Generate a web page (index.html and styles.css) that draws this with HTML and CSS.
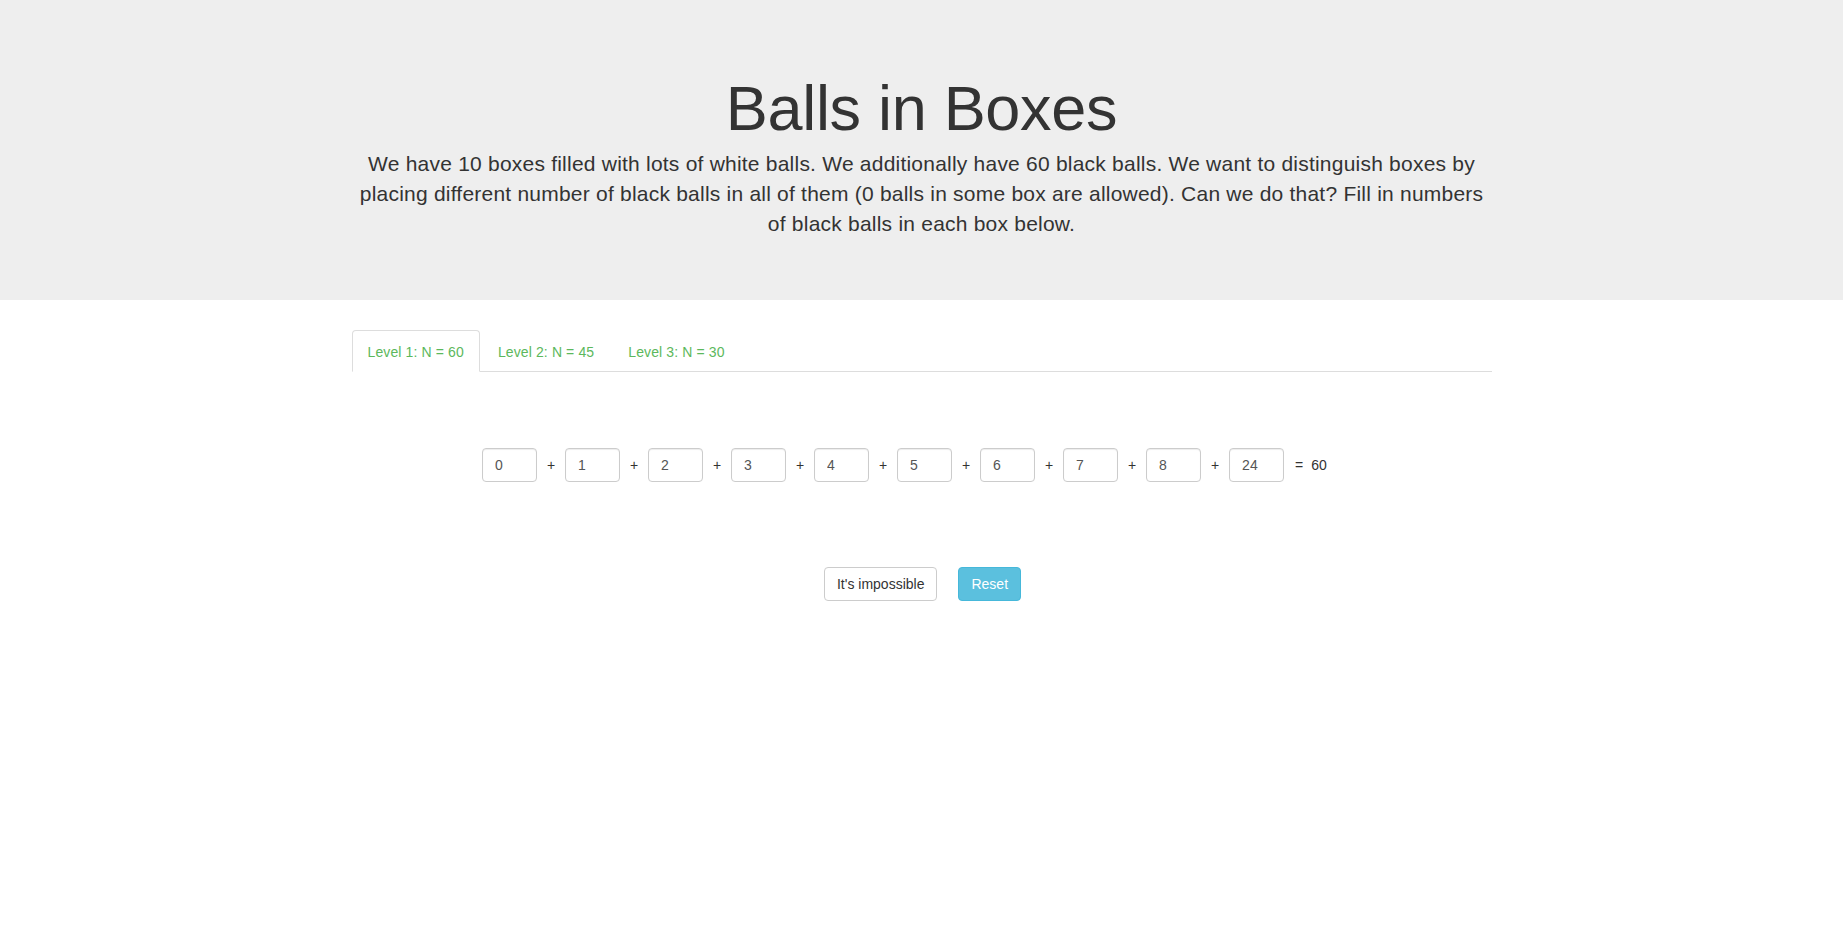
FILE: index.html
```html
<!DOCTYPE html>
<html lang="en">
<head>
<meta charset="utf-8">
<title>Balls in Boxes</title>
<link rel="stylesheet" href="styles.css">
</head>
<body>
<div class="jumbotron">
  <div class="container">
    <h1 class="title">Balls in Boxes</h1>
    <p class="lead">We have 10 boxes filled with lots of white balls. We additionally have 60 black balls. We want to distinguish boxes by placing different number of black balls in all of them (0 balls in some box are allowed). Can we do that? Fill in numbers of black balls in each box below.</p>
  </div>
</div>
<div class="container">
  <ul class="tabs">
    <li class="tab active"><a href="#">Level 1: N = 60</a></li>
    <li class="tab"><a href="#">Level 2: N = 45</a></li>
    <li class="tab"><a href="#">Level 3: N = 30</a></li>
  </ul>
  <div class="sum-row">
    <input class="box" type="text" value="0">
    <span class="op">+</span>
    <input class="box" type="text" value="1">
    <span class="op">+</span>
    <input class="box" type="text" value="2">
    <span class="op">+</span>
    <input class="box" type="text" value="3">
    <span class="op">+</span>
    <input class="box" type="text" value="4">
    <span class="op">+</span>
    <input class="box" type="text" value="5">
    <span class="op">+</span>
    <input class="box" type="text" value="6">
    <span class="op">+</span>
    <input class="box" type="text" value="7">
    <span class="op">+</span>
    <input class="box" type="text" value="8">
    <span class="op">+</span>
    <input class="box" type="text" value="24">
    <span class="eq">=</span>
    <span class="total">60</span>
  </div>
  <div class="actions">
    <button class="btn btn-default" type="button">It's impossible</button>
    <button class="btn btn-info" type="button">Reset</button>
  </div>
</div>
</body>
</html>
```
FILE: styles.css
```css
* { box-sizing: border-box; }
html, body { margin: 0; padding: 0; }
body {
  font-family: "Liberation Sans", Arial, sans-serif;
  font-size: 14px;
  line-height: 1.42857143;
  color: #333;
  background: #fff;
}
.container {
  width: 1170px;
  margin: 0 auto;
  padding: 0 15px;
}
.jumbotron {
  background: #eeeeee;
  padding: 48px 0;
  margin-bottom: 30px;
  text-align: center;
}
.title {
  font-size: 63px;
  font-weight: 500;
  line-height: 1.1;
  letter-spacing: -0.3px;
  margin: 26px 0 6px;
  color: #333;
}
.lead {
  font-size: 21px;
  font-weight: 200;
  line-height: 30px;
  letter-spacing: 0.22px;
  margin: 0 0 13px;
}
.tabs {
  list-style: none;
  margin: 0;
  padding: 0;
  display: flex;
  border-bottom: 1px solid #ddd;
}
.tab {
  margin-bottom: -1px;
  margin-right: 2px;
}
.tab a {
  display: block;
  padding: 11px 15px 9px;
  line-height: 20px;
  letter-spacing: 0.12px;
  border: 1px solid transparent;
  border-radius: 4px 4px 0 0;
  color: #5cb85c;
  text-decoration: none;
}
.tab.active a {
  background: #fff;
  border-color: #ddd;
  border-bottom-color: transparent;
}
.sum-row {
  display: flex;
  align-items: center;
  justify-content: center;
  padding-right: 34px;
  margin-top: 76px;
}
.box {
  width: 55px;
  height: 34px;
  padding: 6px 12px;
  border: 1px solid #ccc;
  border-radius: 4px;
  font-family: inherit;
  font-size: 14px;
  color: #555;
  background: #fff;
  box-shadow: inset 0 1px 1px rgba(0,0,0,.075);
}
.op {
  width: 28px;
  text-align: center;
  color: #333;
}
.eq {
  margin-left: 11px;
  color: #333;
}
.total {
  margin-left: 8px;
  color: #333;
}
.actions {
  display: flex;
  justify-content: center;
  gap: 21px;
  margin-top: 85px;
  padding-left: 2px;
}
.btn {
  font-family: inherit;
  font-size: 14px;
  line-height: 20px;
  padding: 6px 12px;
  border: 1px solid transparent;
  border-radius: 4px;
  cursor: pointer;
}
.btn-default {
  background: #fff;
  border-color: #ccc;
  color: #333;
}
.btn-info {
  background: #5bc0de;
  border-color: #46b8da;
  color: #fff;
}
```
